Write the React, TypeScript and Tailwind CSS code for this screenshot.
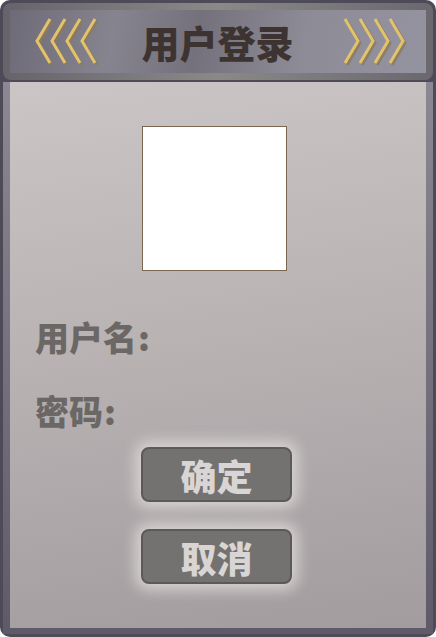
import React from "react";

const Chevrons = ({ dir }: { dir: "left" | "right" }) => {
  const items = [0, 1, 2, 3];
  const pts = (i: number, dx: number, dy: number) => {
    if (dir === "left") {
      const tip = 3 + 15 * i + dx;
      const end = 16 + 15 * i + dx;
      return `${end},${2 + dy} ${tip},${24 + dy} ${end},${46 + dy}`;
    }
    const start = 3 + 15 * i + dx;
    const tip = 16 + 15 * i + dx;
    return `${start},${2 + dy} ${tip},${24 + dy} ${start},${46 + dy}`;
  };
  return (
    <svg width="66" height="50" viewBox="0 0 66 50">
      {items.map((i) => (
        <polyline key={"s" + i} points={pts(i, 2, 2)} fill="none" stroke="#8c7b5a" strokeWidth="3" strokeOpacity="0.8" />
      ))}
      {items.map((i) => (
        <polyline key={"f" + i} points={pts(i, 0, 0)} fill="none" stroke="#e3c26c" strokeWidth="3" />
      ))}
    </svg>
  );
};

export default function App() {
  const font = { fontFamily: '"Noto Sans CJK SC", "Noto Sans", sans-serif' };
  return (
    <div className="w-[436px] h-[637px] bg-[#4e4a57] rounded-[10px] p-[3px] flex flex-col" style={font}>
      <div className="h-[77px] rounded-[8px] bg-[linear-gradient(90deg,#66646a,#8a8987_50%,#6a686e)] p-[7px] shrink-0">
        <div className="h-full bg-[linear-gradient(100deg,#6e6b78_0%,#86848f_25%,#74717c_45%,#8d8b96_70%,#9493a0_100%)] flex items-center justify-between pl-[24px] pr-[18px]">
          <Chevrons dir="left" />
          <div className="flex-1 text-center text-[38px] leading-none font-black text-[#3d3432] pr-[7px]">用户登录</div>
          <Chevrons dir="right" />
        </div>
      </div>
      <div className="mt-[2px] flex-1 flex flex-col bg-[linear-gradient(180deg,#8b8893,#5e5a68)] px-[7px] pb-[6px]">
        <div className="flex-1 flex flex-col bg-[linear-gradient(172deg,#cbc6c5_0%,#b9b3b4_45%,#a29c9f_100%)]">
          <div className="mt-[44px] ml-[132px] w-[145px] h-[145px] bg-white border border-[#7a6650]" />
          <div className="mt-[46px] pl-[25px] text-[34px] leading-[40px] font-black text-[#6b6765]">用户名<span className="ml-[1px]">:</span></div>
          <div className="mt-[34px] pl-[25px] text-[34px] leading-[40px] font-black text-[#6b6765]">密码<span className="ml-[1px]">:</span></div>
          <button className="mt-[16px] ml-[131px] w-[151px] h-[55px] rounded-[8px] bg-[#737270] border-2 border-[#5c5a59] text-[36px] leading-none font-black text-[#d9d5d4] flex items-center justify-center shadow-[0_0_14px_6px_rgba(222,218,215,0.85)]">确定</button>
          <button className="mt-[27px] ml-[131px] w-[151px] h-[55px] rounded-[8px] bg-[#737270] border-2 border-[#5c5a59] text-[36px] leading-none font-black text-[#d9d5d4] flex items-center justify-center shadow-[0_0_14px_6px_rgba(222,218,215,0.85)]">取消</button>
        </div>
      </div>
    </div>
  );
}
